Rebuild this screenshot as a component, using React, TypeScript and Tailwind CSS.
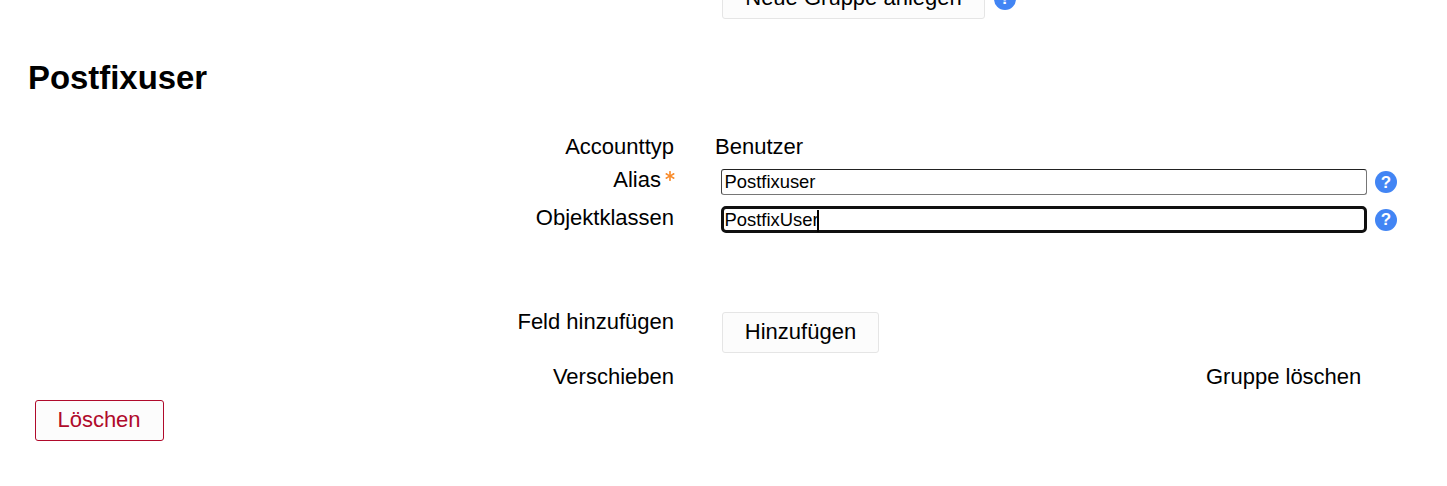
import { FaAsterisk } from "react-icons/fa";

function Help() {
  return (
    <span className="flex h-[22px] w-[22px] shrink-0 items-center justify-center rounded-full bg-[#4285f4] text-[17px] font-bold leading-none text-white">?</span>
  );
}

function Btn({ children, className = "" }: { children: React.ReactNode; className?: string }) {
  return (
    <button className={`h-[41px] rounded-[3px] border border-[#e5e5e5] bg-[#fcfcfc] pb-[2px] text-[22px] leading-none text-black ${className}`}>{children}</button>
  );
}

export default function App() {
  return (
    <div className="h-[486px] w-full overflow-hidden bg-white font-['Liberation_Sans',sans-serif] text-[22px] leading-[26px] text-black">
      <div className="-mt-[22px] ml-[722px] flex items-center gap-[9px]">
        <Btn className="w-[263px]">Neue Gruppe anlegen</Btn>
        <Help />
      </div>
      <h2 className="ml-[28px] mt-[40px] text-[32.9px] font-bold leading-[38px]">Postfixuser</h2>
      <div className="mt-[37px] flex h-[26px]">
        <div className="w-[674px] text-right">Accounttyp</div>
        <div className="ml-[41px]">Benutzer</div>
      </div>
      <div className="mt-[9px] flex h-[26px]">
        <div className="flex w-[674px] justify-end">
          <span className="-mt-[2px]">Alias</span>
          <span className="ml-[4px] mt-[2px] h-[9px] w-[9px] text-[#f98b2a]"><FaAsterisk size={10} /></span>
        </div>
        <input readOnly value="Postfixuser" className="ml-[47px] h-[26px] w-[646px] rounded-[3px] border border-[#767676] border-t-[#222] border-l-[#444] px-[2.5px] text-[18.4px] text-black" />
        <div className="ml-[8px] flex items-center"><Help /></div>
      </div>
      <div className="mt-[11px] flex h-[27px]">
        <div className="-mt-[1px] w-[674px] text-right">Objektklassen</div>
        <div className="relative ml-[47px] h-[27px] w-[646px] rounded-[5px] border-[3px] border-[#101010] pl-[0.5px] text-[18.4px] leading-[22px]">
          PostfixUser
          <span className="absolute left-[93px] top-[1px] h-[22px] w-[2px] bg-black" />
        </div>
        <div className="ml-[8px] flex items-center"><Help /></div>
      </div>
      <div className="mt-[79px] flex h-[41px]">
        <div className="w-[674px] text-right -mt-[3px]">Feld hinzufügen</div>
        <Btn className="ml-[48px] w-[157px]">Hinzufügen</Btn>
      </div>
      <div className="mt-[11px] flex h-[26px]">
        <div className="w-[674px] text-right">Verschieben</div>
        <div className="ml-[532px]">Gruppe löschen</div>
      </div>
      <button className="ml-[35px] mt-[10px] h-[41px] w-[129px] rounded-[3px] border border-[#b00a2b] bg-[#fcfcfc] pb-[2px] pr-[1px] text-[22px] leading-none text-[#b00a2b]">Löschen</button>
    </div>
  );
}
